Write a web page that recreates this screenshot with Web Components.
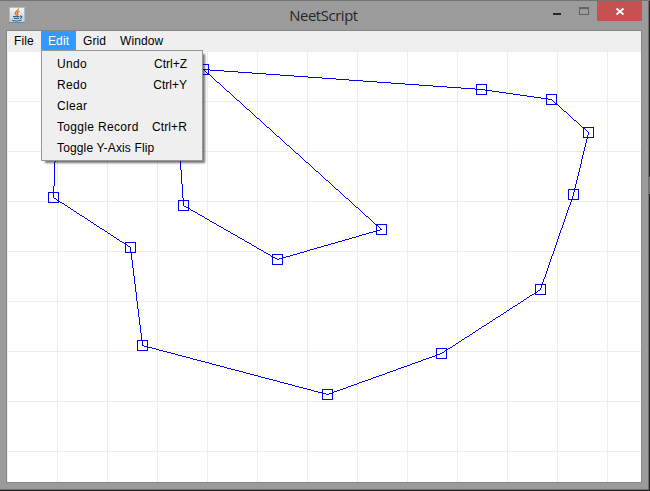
<!DOCTYPE html>
<html lang="en"><head><meta charset="utf-8"><title>NeetScript</title>
<style>html,body{margin:0;height:100%;overflow:hidden}</style></head>
<body>
<neet-window caption="NeetScript">
  <menu-bar slot="menu">
    <menu-title style="--w:34px">File</menu-title>
    <menu-title active style="--w:35px">Edit
      <menu-popup slot="popup">
        <menu-item keys="Ctrl+Z" style="--ls:.3px">Undo</menu-item>
        <menu-item keys="Ctrl+Y" style="--ls:.3px">Redo</menu-item>
        <menu-item style="--ls:.3px">Clear</menu-item>
        <menu-item keys="Ctrl+R" style="--ls:.33px;--ks:.1px">Toggle Record</menu-item>
        <menu-item style="--ls:.15px">Toggle Y-Axis Flip</menu-item>
      </menu-popup>
    </menu-title>
    <menu-title style="--w:37px">Grid</menu-title>
    <menu-title style="--w:58px">Window</menu-title>
  </menu-bar>
  <path-canvas></path-canvas>
</neet-window>
<script>
const define = (name, html, setup) => customElements.define(name, class extends HTMLElement {
  connectedCallback() {
    if (this.shadowRoot) return;
    const root = this.attachShadow({ mode: 'open' });
    const t = document.createElement('template');
    t.innerHTML = html;
    root.append(t.content.cloneNode(true));
    if (setup) setup(this, root);
  }
});

define('java-icon', `<style>:host{display:block;width:16px;height:16px}svg{display:block}</style>
<svg width="16" height="16" viewBox="0 0 16 16">
<defs><linearGradient id="g" x2="0" y2="1"><stop stop-color="#f4f6f7"/><stop offset="1" stop-color="#c0ced8"/></linearGradient></defs>
<rect x=".5" y=".5" width="15" height="15" fill="url(#g)" stroke="#a9bfcd"/>
<path d="M0 15.5H16" stroke="#5b8db5"/>
<path d="M9.500 1.500C10 3.800 5.400 4.200 6.300 6.400C6.700 7.300 7.700 7.600 7.300 8.800M10.500 4.300C7.800 5.200 8 6 8.700 6.900C9.100 7.600 8.700 8.100 8.200 8.800" fill="none" stroke="#e56f17" stroke-width="1.400"/>
<path d="M4 9.600H10.500M5 11.500H10M3 13.300C5 14.300 10 14.300 12.500 13M11 9.200C13.600 8.500 13.400 10.900 11 11.500" fill="none" stroke="#2f628c" stroke-width="1.200"/>
</svg>`);

define('title-bar', `<style>
:host{display:grid;grid-template-columns:9px 16px 1fr;height:30px;box-sizing:border-box;border-top:1px solid #727272;position:relative}
java-icon{grid-column:2;margin-top:6px}
.t{position:absolute;left:0;right:3px;top:3px;text-align:center;font:14.800px/22px "Open Sans","Noto Sans",sans-serif;color:#262626;letter-spacing:-.38px}
.b{justify-self:end;display:flex;margin-right:2px}
svg{display:block}
</style><java-icon></java-icon><div class="t"></div>
<div class="b"><svg width="105" height="21" shape-rendering="crispEdges">
<rect x="10" y="12" width="8" height="2" fill="#262626"/>
<path d="M36.500 7.500h9v6h-9zM36 6.500h10" fill="none" stroke="#626262"/>
<rect x="54" y="0" width="45" height="20" fill="#c75050"/>
<g shape-rendering="auto" stroke="#fff" stroke-width="1.800"><path d="M73.500 7.500l7 6M80.500 7.500l-7 6"/></g>
</svg></div>`, (el, r) => r.querySelector('.t').textContent = el.getAttribute('caption'));

define('neet-window', `<style>
:host{display:flex;flex-direction:column;box-sizing:border-box;width:650px;height:491px;background:#9b9b9b;border-right:1px solid;border-image:linear-gradient(#222 178px,#777 178px,#777 195px,#222 195px) 1;border-bottom:1px solid #222;box-shadow:inset -1px -1px #707070;font:12px/15px "Liberation Sans",Arial,sans-serif;color:#000}
title-bar{margin-right:-1px}
.c{margin-left:6px;width:636px;height:453px;box-sizing:border-box;border:1px solid #858585;display:flex;flex-direction:column;background:#fff}
</style><title-bar></title-bar><div class="c"><slot name="menu"></slot><slot></slot></div>`,
(el, r) => r.querySelector('title-bar').shadowRoot?.querySelector('.t').append(el.getAttribute('caption')));

define('menu-bar', `<style>:host{display:flex;height:20px;background:#efefef;position:relative;z-index:2}</style><slot></slot>`);

define('menu-title', `<style>
:host{display:block;position:relative;box-sizing:border-box;width:var(--w);height:20px;padding:2px 0 0 7px;line-height:16px;white-space:nowrap;letter-spacing:.1px}
:host([active]){background:#3399ff;color:#fff}
::slotted(menu-popup){position:absolute;left:0;top:19px}
</style><slot></slot><slot name="popup"></slot>`);

define('menu-popup', `<style>
:host{display:flex;flex-direction:column;box-sizing:border-box;width:162px;height:111px;padding:3px 0 1px;border:1px solid #979797;background:#efefef;color:#000;box-shadow:3px 3px 2px -1px rgba(0,0,0,.55)}
</style><slot></slot>`);

define('menu-item', `<style>
:host{display:flex;justify-content:space-between;height:21px;line-height:21px;padding:0 15px;letter-spacing:var(--ls,.1px)}
.k{letter-spacing:var(--ks,0)}
</style><span><slot></slot></span><span class="k"></span>`, (el, r) => r.querySelector('.k').textContent = el.getAttribute('keys') || '');

define('path-canvas', `<style>:host{display:block;height:431px}svg{display:block}</style>
<svg width="634" height="431" viewBox="7 51 634 431" shape-rendering="crispEdges"></svg>`, (el, r) => {
  const outer = [[203,69],[481,89],[551,99],[588,132],[573,194],[540,289],[441,353],[327,394],[142,345],[130,247],[53,197],[55,149]];
  const inner = [[203,69],[381,229],[277,259],[183,205],[179,149]];
  // One-pixel stepped strokes, built as unit cells along each segment.
  const cells = pts => {
    let d = '';
    for (let i = 1; i < pts.length; i++) {
      const [x, y] = pts[i - 1], [u, v] = pts[i];
      const n = Math.max(Math.abs(u - x), Math.abs(v - y));
      for (let k = 0; k <= n; k++)
        d += `M${Math.round(x + (u - x) * k / n)} ${Math.round(y + (v - y) * k / n)}h1v1h-1z`;
    }
    return d;
  };
  let grid = '';
  for (let x = 7; x < 641; x += 50) grid += `M${x} 51h1v431h-1z`;
  for (let y = 51; y < 482; y += 50) grid += `M7 ${y}h634v1h-634z`;
  const nodes = outer.slice(0, -1).concat(inner.slice(1, -1)).map(([x, y]) => `M${x - 4.5} ${y - 4.5}h10v10h-10z`).join('');
  r.querySelector('svg').innerHTML =
    `<path d="${grid}" fill="#ededed"/><path d="${cells(outer)}${cells(inner)}" fill="#0000ff"/><path d="${nodes}" fill="none" stroke="#0000ff"/>`;
});

</script>
</body></html>
